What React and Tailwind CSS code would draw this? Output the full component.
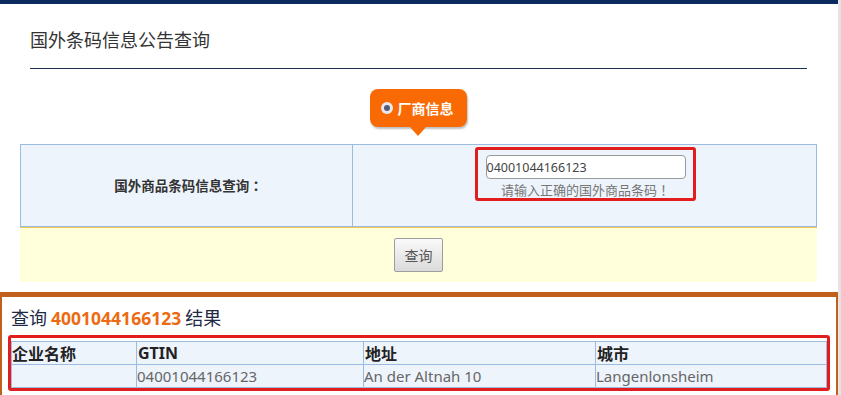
import React from "react";

const latin = "font-['Noto_Sans','Noto_Sans_CJK_SC',sans-serif]";
const cjk = "font-['Noto_Sans_CJK_SC','Noto_Sans',sans-serif]";
const punct = "font-['Noto_Sans_CJK_TC',sans-serif]";

export default function App() {
  return (
    <div className={`w-[841px] h-[395px] overflow-hidden bg-white flex [text-spacing-trim:space-all] ${cjk}`}>
      <div className="w-[838px] flex flex-col">
        {/* top bar */}
        <div className="h-[4px] bg-[#0b2b5f] shrink-0" />

        {/* page title */}
        <div className="px-[30px] pt-[22px]">
          <div className="pb-[16px] mr-[1px] border-b-[1.5px] border-[#1c2f4f]">
            <h1 className="text-[18px] leading-[26px] text-[#333] font-normal">国外条码信息公告查询</h1>
          </div>
        </div>

        {/* tab bubble */}
        <div className="flex justify-center pt-[20px] pr-[2px]">
          <div className="relative">
            <div className="h-[38px] w-[97px] rounded-[8px] bg-[#f96a05] shadow-[1px_2px_2px_rgba(0,0,0,0.25)] flex items-center pl-[11px] gap-[5px]">
              <span className="w-[12px] h-[12px] rounded-full bg-[#e8e8ee] flex items-center justify-center">
                <span className="w-[6px] h-[6px] rounded-full bg-[#555b78]" />
              </span>
              <span className="text-white text-[14px] font-bold leading-none">厂商信息</span>
            </div>
            <div className="absolute left-1/2 -translate-x-1/2 top-[38px] w-0 h-0 border-l-[8px] border-r-[8px] border-t-[9px] border-l-transparent border-r-transparent border-t-[#f96a05]" />
          </div>
        </div>

        {/* query table */}
        <div className="mx-[20px] mr-[21px] mt-[17px]">
          <div className="flex border border-[#9bbbe0] bg-[#eef4fc] h-[83px]">
            <div className="w-[332px] border-r border-[#9bbbe0] flex items-center justify-center">
              <span className="text-[13.5px] font-bold text-[#333] pl-[4px]">
                国外商品条码信息查询<span className={punct}>：</span>
              </span>
            </div>
            <div className="flex-1 flex justify-center pt-[2px] pl-[2px]">
              <div className="w-[221px] h-[54px] border-[3px] border-[#e11d1d] rounded-[3px] flex flex-col items-center pt-[5px]">
                <input
                  readOnly
                  value="04001044166123"
                  className={`w-[200px] h-[25px] border border-[#9a9a9a] rounded-[4px] bg-white text-[12.5px] text-[#444] px-0 outline-none ${latin}`}
                />
                <span className="text-[13px] leading-[16px] text-[#777] mt-[3px]">
                  请输入正确的国外商品条码<span className={punct}>！</span>
                </span>
              </div>
            </div>
          </div>
          <div className="h-[55px] bg-[#ffffdc] border-t border-[#f0c850] flex justify-center pt-[10px]">
            <button className="w-[49px] h-[34px] border border-[#9e9e9e] rounded-[2px] bg-gradient-to-b from-[#fafafa] to-[#dadada] text-[14px] text-[#555]">
              查询
            </button>
          </div>
        </div>

        {/* results */}
        <div className="mt-[10px] flex-1 border-t-[5px] border-x-2 border-[#c0601c] pl-[6px] pr-[5px]">
          <div className="text-[18px] leading-[24px] text-[#1f2a44] pt-[8px] pl-[3px]">
            查询 <span className={`font-bold text-[#ec6b12] text-[17.5px] ${latin}`}>4001044166123</span> 结果
          </div>
          <div className="mt-[5px] border-[3px] border-[#e11d1d] rounded-[3px] pt-[3px] w-[822px]">
            <div className="border border-[#9bbbe0] bg-[#eef4fc]">
              <div className="grid grid-cols-[124px_227px_232px_1fr] h-[23px] leading-[22px] text-[16px] font-bold text-[#222] border-b border-[#9bbbe0]">
                <div>企业名称</div>
                <div className={`pl-[1px] border-l border-[#9bbbe0] ${latin}`}>GTIN</div>
                <div className="pl-[1px] border-l border-[#9bbbe0]">地址</div>
                <div className="pl-[1px] border-l border-[#9bbbe0]">城市</div>
              </div>
              <div className={`grid grid-cols-[124px_227px_232px_1fr] h-[22px] leading-[22px] text-[15px] text-[#666] ${latin}`}>
                <div></div>
                <div className="border-l border-[#9bbbe0]">04001044166123</div>
                <div className="border-l border-[#9bbbe0]">An der Altnah 10</div>
                <div className="border-l border-[#9bbbe0]">Langenlonsheim</div>
              </div>
            </div>
          </div>
        </div>
      </div>
      <div className="w-[3px] bg-[#e4e4e4]" />
    </div>
  );
}
